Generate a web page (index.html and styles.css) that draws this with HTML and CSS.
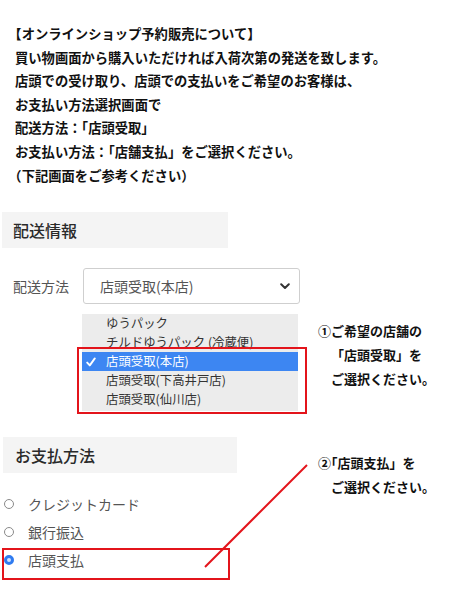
FILE: index.html
```html
<!DOCTYPE html>
<html lang="ja">
<head>
<meta charset="utf-8">
<link rel="stylesheet" href="styles.css">
</head>
<body>
<div class="page">
  <p class="intro"><span class="half">【</span>オンラインショップ予約販売について】<br>買い物画面から購入いただければ入荷次第の発送を致します。<br>店頭での受け取り、店頭での支払いをご希望のお客様は、<br>お支払い方法選択画面で<br>配送方法：「店頭受取」<br>お支払い方法：「店舗支払」をご選択ください。<br><span class="half">（</span>下記画面をご参考ください）</p>

  <div class="head head-ship">配送情報</div>

  <div class="field">
    <span class="label">配送方法</span>
    <div class="select">
      <span>店頭受取(本店)</span>
      <svg class="chev" width="10" height="7" viewBox="0 0 10 7"><path d="M1.2 1.3 L5 5 L8.8 1.3" fill="none" stroke="#333" stroke-width="2" stroke-linecap="round" stroke-linejoin="round"/></svg>
    </div>
  </div>

  <div class="menu-row">
    <div class="menu">
      <div class="opt">ゆうパック</div>
      <div class="opt">チルドゆうパック (冷蔵便)</div>
      <div class="opt sel"><svg class="check" width="10" height="10" viewBox="0 0 10 10"><path d="M1.2 5.6 L3.8 8.4 L8.8 1.4" fill="none" stroke="#fff" stroke-width="1.9" stroke-linecap="round" stroke-linejoin="round"/></svg>店頭受取(本店)</div>
      <div class="opt">店頭受取(下高井戸店)</div>
      <div class="opt">店頭受取(仙川店)</div>
      <div class="mark mark-menu"></div>
    </div>
    <div class="note note-1">
      <div>①ご希望の店舗の</div>
      <div class="indent">「店頭受取」を</div>
      <div class="indent">ご選択ください。</div>
    </div>
  </div>

  <div class="pay">
    <div class="pay-left">
      <div class="head head-pay">お支払方法</div>
      <div class="radios">
        <div class="radio-row"><span class="radio"></span><span>クレジットカード</span></div>
        <div class="radio-row"><span class="radio"></span><span>銀行振込</span></div>
        <div class="radio-row"><span class="radio on"></span><span>店頭支払</span><div class="mark mark-pay"></div></div>
      </div>
    </div>
    <div class="note note-2">
      <div>②<span class="half">「</span>店頭支払」を</div>
      <div class="indent">ご選択ください。</div>
    </div>
    <svg class="pointer" width="455" height="160" viewBox="0 0 455 160"><line x1="205" y1="130" x2="307" y2="28" stroke="#e3141b" stroke-width="2"/></svg>
  </div>
</div>
</body>
</html>
```

FILE: styles.css
```css
html, body {
  margin: 0;
  padding: 0;
  background: #fff;
}
body {
  font-family: "Noto Sans CJK JP", "Noto Sans", sans-serif;
  color: #222;
}
.page {
  width: 455px;
  height: 589px;
  overflow: hidden;
}
.intro {
  margin: 0;
  padding: 22px 0 0 15px;
  font-size: 13.3px;
  font-weight: 700;
  line-height: 23.6px;
  color: #111;
  white-space: nowrap;
}
.half {
  font-feature-settings: "halt" 1;
}
.head {
  background: #f4f4f4;
  height: 36px;
  line-height: 36px;
  font-size: 16px;
  font-weight: 500;
  color: #2a2a2a;
  box-sizing: border-box;
}
.head-ship {
  margin: 25px 0 0 2px;
  width: 226px;
  padding-left: 11px;
}
.field {
  display: flex;
  align-items: center;
  margin-top: 20px;
}
.label {
  width: 70px;
  padding-left: 13px;
  font-size: 14px;
  color: #555;
}
.select {
  width: 217px;
  height: 36px;
  box-sizing: border-box;
  border: 1px solid #cfcfcf;
  border-radius: 3px;
  display: flex;
  align-items: center;
  justify-content: space-between;
  padding: 0 9px 0 16px;
  font-size: 14px;
  color: #555;
}
.menu-row {
  display: flex;
  margin-top: 10px;
  padding-left: 82px;
}
.menu {
  position: relative;
  width: 216px;
  background: #ececec;
  padding-bottom: 2px;
}
.opt {
  height: 19px;
  line-height: 19px;
  font-size: 12.4px;
  color: #333;
  padding-left: 24px;
  position: relative;
  white-space: nowrap;
}
.opt.sel {
  background: #3d86f2;
  color: #fff;
}
.check {
  position: absolute;
  left: 4px;
  top: 5px;
}
.mark {
  position: absolute;
  border: 2px solid #e3141b;
  box-sizing: border-box;
}
.mark-menu {
  left: -5px;
  top: 33px;
  width: 230px;
  height: 67px;
}
.note {
  font-size: 13px;
  font-weight: 700;
  line-height: 24px;
  color: #111;
  white-space: nowrap;
}
.note-1 {
  margin-left: 20px;
  padding-top: 5px;
}
.indent {
  padding-left: 13px;
}
.pay {
  position: relative;
  display: flex;
  margin-top: 26px;
}
.pay-left {
  width: 300px;
}
.head-pay {
  margin-left: 3px;
  width: 234px;
  padding-left: 12px;
}
.radios {
  margin-top: 17px;
}
.radio-row {
  position: relative;
  height: 28px;
  display: flex;
  align-items: center;
  font-size: 14px;
  color: #555;
}
.radio {
  width: 10px;
  height: 10px;
  box-sizing: border-box;
  border: 1px solid #8a8a8a;
  border-radius: 50%;
  margin: 0 14px 0 4px;
  background: #fff;
}
.radio.on {
  border: 3px solid #2f7bf0;
  background: #cfe2ff;
}
.mark-pay {
  left: 2px;
  top: 2px;
  width: 228px;
  height: 32px;
}
.note-2 {
  margin-left: 18px;
  padding-top: 14px;
}
.pointer {
  position: absolute;
  left: 0;
  top: 0;
  pointer-events: none;
}
```
